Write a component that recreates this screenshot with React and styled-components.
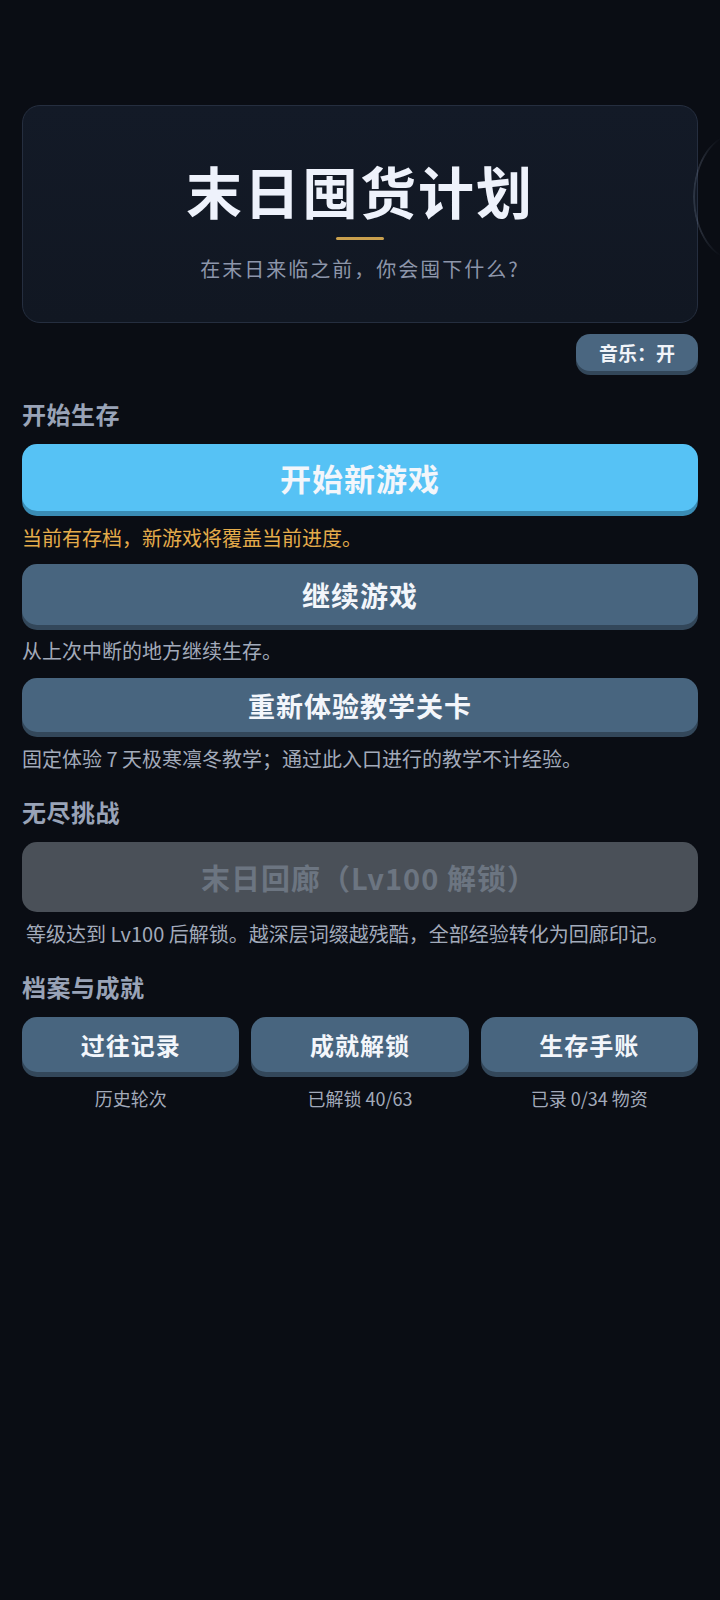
import React from "react";
import styled, { createGlobalStyle } from "styled-components";

const Global = createGlobalStyle`
  html, body { margin: 0; padding: 0; background: #0a0d14; }
  body { font-family: "Noto Sans CJK SC", "Noto Sans", sans-serif; }
  * { box-sizing: border-box; }
`;

const Page = styled.div`
  position: relative;
  min-height: 1600px;
  overflow: hidden;
  background: #0a0d14;
  padding: 105px 22px 0;
  display: flex;
  flex-direction: column;
`;

const SideRing = styled.div`
  position: absolute;
  left: 693px;
  top: 132px;
  width: 90px;
  height: 130px;
  border-radius: 50%;
  border: 2px solid rgba(150, 165, 190, 0.2);
  -webkit-mask-image: linear-gradient(180deg, transparent 4%, #000 22%, #000 78%, transparent 96%);
  mask-image: linear-gradient(180deg, transparent 4%, #000 22%, #000 78%, transparent 96%);
`;

const HeroCard = styled.header`
  height: 218px;
  border-radius: 18px;
  border: 1px solid #252e3f;
  background: linear-gradient(180deg, #131a27 0%, #111722 100%);
  display: flex;
  flex-direction: column;
  align-items: center;
  padding-top: 50px;
`;

const Title = styled.h1`
  margin: 0;
  font-size: 56px;
  line-height: 67px;
  font-weight: 700;
  letter-spacing: 2px;
  color: #eef2fb;
`;

const GoldBar = styled.div`
  width: 48px;
  height: 3px;
  border-radius: 2px;
  background: #c9a04e;
  margin-top: 14px;
`;

const Subtitle = styled.p`
  margin: 15px 0 0;
  font-size: 20px;
  line-height: 28px;
  letter-spacing: 2px;
  color: #8d96aa;
`;

const MusicRow = styled.div`
  display: flex;
  justify-content: flex-end;
  margin-top: 11px;
`;

const MusicButton = styled.button`
  width: 122px;
  height: 37px;
  border: none;
  border-radius: 14px;
  background: #4a6680;
  box-shadow: 0 4px 0 #33475a;
  color: #f1f4f9;
  font-family: inherit;
  font-size: 19px;
  font-weight: 700;
  padding: 0;
`;

const Section = styled.section`
  display: flex;
  flex-direction: column;
  margin-top: ${(p) => p.$top}px;
`;

const SectionTitle = styled.h2`
  margin: 0 0 15px;
  font-size: 24px;
  line-height: 30px;
  font-weight: 700;
  letter-spacing: 0.5px;
  color: #99a3b7;
`;

const BigButton = styled.button`
  width: 100%;
  height: ${(p) => p.$h}px;
  margin-top: ${(p) => p.$mt || 0}px;
  border: none;
  border-radius: 15px;
  font-family: inherit;
  font-weight: 700;
  font-size: ${(p) => p.$fs || 28}px;
  letter-spacing: 1px;
  padding: ${(p) => (p.$variant === "disabled" ? "0 0 0 18px" : "0")};
  color: ${(p) => (p.$variant === "disabled" ? "#6c7581" : "#f3f6fb")};
  background: ${(p) =>
    p.$variant === "primary" ? "#56c2f5" : p.$variant === "disabled" ? "#4a5058" : "#48657f"};
  box-shadow: ${(p) =>
    p.$variant === "primary"
      ? "0 5px 0 #3a8cb5"
      : p.$variant === "disabled"
      ? "none"
      : "0 5px 0 #33475a"};
`;

const Note = styled.p`
  margin: ${(p) => p.$mt}px 0 0;
  padding-left: ${(p) => p.$indent || 0}px;
  font-size: 20px;
  line-height: 26px;
  color: ${(p) => (p.$warn ? "#e5ac4b" : "#a2aaba")};
`;

const Grid = styled.div`
  display: grid;
  grid-template-columns: repeat(3, 1fr);
  column-gap: 12px;
`;

const Cell = styled.div`
  display: flex;
  flex-direction: column;
  align-items: center;
`;

const SmallButton = styled.button`
  width: 100%;
  height: 55px;
  border: none;
  border-radius: 15px;
  background: #48657f;
  box-shadow: 0 5px 0 #33475a;
  color: #f3f6fb;
  font-family: inherit;
  font-size: 24px;
  font-weight: 700;
  letter-spacing: 1px;
  padding: 0;
`;

const CellLabel = styled.span`
  margin-top: 14px;
  font-size: 18px;
  line-height: 24px;
  color: #a2aaba;
`;

const archive = [
  { label: "过往记录", sub: "历史轮次" },
  { label: "成就解锁", sub: "已解锁 40/63" },
  { label: "生存手账", sub: "已录 0/34 物资" },
];

export default function App() {
  return (
    <>
      <Global />
      <Page>
        <SideRing />
        <HeroCard>
          <Title>末日囤货计划</Title>
          <GoldBar />
          <Subtitle>在末日来临之前，你会囤下什么?</Subtitle>
        </HeroCard>
        <MusicRow>
          <MusicButton>音乐：开</MusicButton>
        </MusicRow>

        <Section $top={28}>
          <SectionTitle>开始生存</SectionTitle>
          <BigButton $variant="primary" $h={67} $fs={31}>开始新游戏</BigButton>
          <Note $warn $mt={14}>当前有存档，新游戏将覆盖当前进度。</Note>
          <BigButton $h={61} $mt={13}>继续游戏</BigButton>
          <Note $mt={13}>从上次中断的地方继续生存。</Note>
          <BigButton $h={54} $mt={14} $fs={27}>重新体验教学关卡</BigButton>
          <Note $mt={14}>固定体验 7 天极寒凛冬教学；通过此入口进行的教学不计经验。</Note>
        </Section>

        <Section $top={25}>
          <SectionTitle>无尽挑战</SectionTitle>
          <BigButton $variant="disabled" $h={70} $fs={29}>末日回廊（Lv100 解锁）</BigButton>
          <Note $mt={9} $indent={4}>等级达到 Lv100 后解锁。越深层词缀越残酷，全部经验转化为回廊印记。</Note>
        </Section>

        <Section $top={25}>
          <SectionTitle>档案与成就</SectionTitle>
          <Grid>
            {archive.map((a) => (
              <Cell key={a.label}>
                <SmallButton>{a.label}</SmallButton>
                <CellLabel>{a.sub}</CellLabel>
              </Cell>
            ))}
          </Grid>
        </Section>
      </Page>
    </>
  );
}
